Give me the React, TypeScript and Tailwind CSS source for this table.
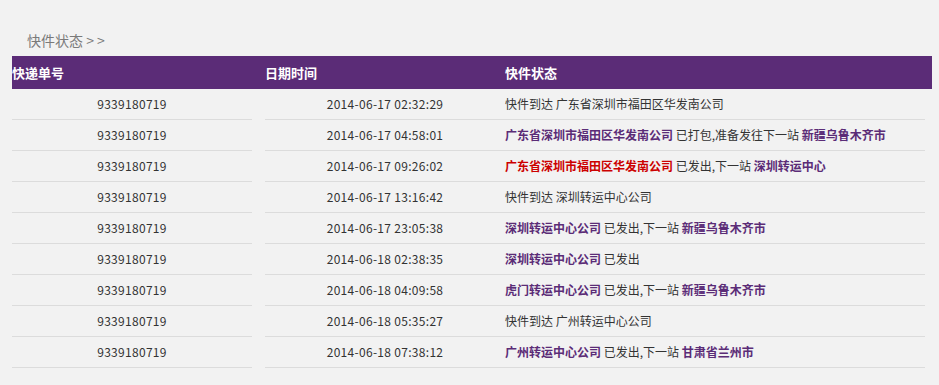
import React from "react";

type Seg = { t: string; c?: "p" | "r" };
const P = "p" as const;
const R = "r" as const;

const rows: { date: string; segs: Seg[] }[] = [
  { date: "2014-06-17 02:32:29", segs: [{ t: "快件到达 广东省深圳市福田区华发南公司" }] },
  { date: "2014-06-17 04:58:01", segs: [{ t: "广东省深圳市福田区华发南公司", c: P }, { t: " 已打包,准备发往下一站 " }, { t: "新疆乌鲁木齐市", c: P }] },
  { date: "2014-06-17 09:26:02", segs: [{ t: "广东省深圳市福田区华发南公司", c: R }, { t: " 已发出,下一站 " }, { t: "深圳转运中心", c: P }] },
  { date: "2014-06-17 13:16:42", segs: [{ t: "快件到达 深圳转运中心公司" }] },
  { date: "2014-06-17 23:05:38", segs: [{ t: "深圳转运中心公司", c: P }, { t: " 已发出,下一站 " }, { t: "新疆乌鲁木齐市", c: P }] },
  { date: "2014-06-18 02:38:35", segs: [{ t: "深圳转运中心公司", c: P }, { t: " 已发出" }] },
  { date: "2014-06-18 04:09:58", segs: [{ t: "虎门转运中心公司", c: P }, { t: " 已发出,下一站 " }, { t: "新疆乌鲁木齐市", c: P }] },
  { date: "2014-06-18 05:35:27", segs: [{ t: "快件到达 广州转运中心公司" }] },
  { date: "2014-06-18 07:38:12", segs: [{ t: "广州转运中心公司", c: P }, { t: " 已发出,下一站 " }, { t: "甘肃省兰州市", c: P }] },
];

export default function App() {
  return (
    <div
      className="w-[939px] h-[385px] bg-[#f2f2f2] px-[12px] pt-[30px] text-[#333]"
      style={{ fontFamily: '"Noto Sans CJK SC", "Noto Sans", sans-serif' }}
    >
      <div className="pl-[15px] h-[20px] leading-[20px] text-[14px] text-[#7a7a7a] mb-[6px] whitespace-pre">
        快件状态 &gt; &gt;
      </div>
      <div className="w-[920px] h-[33px] bg-[#5b2c77] flex items-center text-white font-bold text-[13px]">
        <div className="w-[253px]">快递单号</div>
        <div className="w-[240px]">日期时间</div>
        <div>快件状态</div>
      </div>
      {rows.map((r, i) => (
        <div key={i} className="flex h-[31px] text-[12px]">
          <div className="w-[240px] border-b border-[#dcdcdc] flex items-center justify-center tracking-[0.3px]">
            9339180719
          </div>
          <div className="w-[13px]" />
          <div className="w-[660px] border-b border-[#dcdcdc] flex items-center">
            <div className="w-[240px] text-center tracking-[0.3px]">{r.date}</div>
            <div className="whitespace-pre">
              {r.segs.map((s, j) => (
                <span
                  key={j}
                  className={
                    s.c === "p"
                      ? "font-bold text-[#5b2c77]"
                      : s.c === "r"
                      ? "font-bold text-[#cc0000]"
                      : ""
                  }
                >
                  {s.t}
                </span>
              ))}
            </div>
          </div>
        </div>
      ))}
    </div>
  );
}
